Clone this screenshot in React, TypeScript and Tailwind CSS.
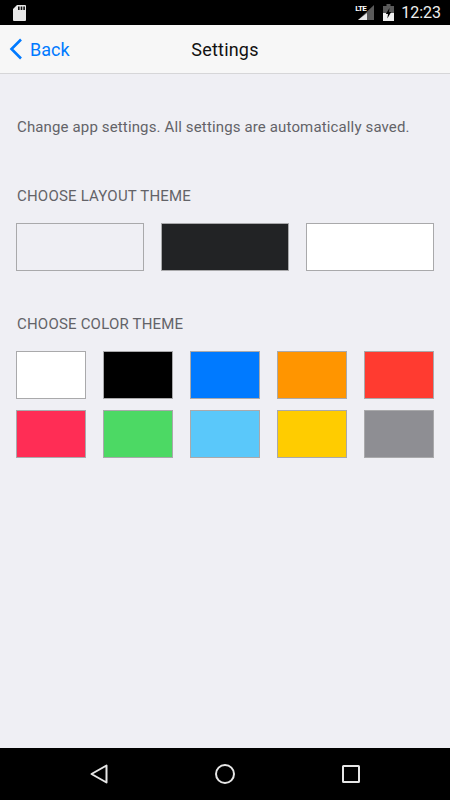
const layouts = ["bg-[#efeff4]", "bg-[#222325]", "bg-white"];
const colors = [
  "bg-white", "bg-black", "bg-[#007aff]", "bg-[#ff9500]", "bg-[#ff3b30]",
  "bg-[#ff2d55]", "bg-[#4cd964]", "bg-[#5ac8fa]", "bg-[#ffcc00]", "bg-[#8e8e93]",
];

export default function App() {
  return (
    <div className="flex h-[800px] w-[450px] flex-col overflow-hidden bg-[#efeff4] font-['Roboto',sans-serif]">
      <div className="flex h-[25px] items-center justify-between bg-black pl-[13px] pr-[9px]">
        <svg width="13" height="16" viewBox="0 0 13 16">
          <path d="M4 0H12a1 1 0 0 1 1 1V15a1 1 0 0 1-1 1H1a1 1 0 0 1-1-1V4Z" fill="#e8e8e8" />
          <rect x="5" y="1.5" width="1.6" height="3.5" fill="#111" />
          <rect x="7.7" y="1.5" width="1.6" height="3.5" fill="#111" />
          <rect x="10.3" y="1.5" width="1.6" height="3.5" fill="#111" />
        </svg>
        <div className="flex items-center">
          <div className="relative h-[17px] w-[20px]">
            <svg width="20" height="17" viewBox="0 0 20 17" className="absolute left-0 top-0">
              <path d="M20 1V16H4Z" fill="#5a5a5a" />
              <path d="M13 9V16H4Z" fill="#e8e8e8" />
            </svg>
            <span className="absolute left-[1px] top-[1px] text-[8px] font-bold leading-[8px] tracking-[-0.6px] text-white">LTE</span>
          </div>
          <svg width="11" height="17" viewBox="0 0 11 17" className="ml-[9px]">
            <path d="M3.5 0H7.5V2H11V17H0V2H3.5Z" fill="#5a5a5a" />
            <path d="M0 9H11V17H0Z" fill="#f0f0f0" />
            <path d="M6.5 4 2.8 10H5L4.3 14.5 8.2 8H6Z" fill="#000" />
          </svg>
          <span className="ml-[7px] text-[16px] leading-none text-[#eeeeee]">12:23</span>
        </div>
      </div>

      <div className="relative flex h-[49px] items-center justify-center border-b border-[#d6d6d8] bg-[#f7f7f7]">
        <div className="absolute left-[9px] top-0 flex h-full items-center text-[#007aff]">
          <svg width="14" height="22" viewBox="0 0 14 22">
            <path d="M12 1.5 2.5 11 12 20.5" fill="none" stroke="#007aff" strokeWidth="2.6" />
          </svg>
          <span className="ml-[7px] text-[18px]">Back</span>
        </div>
        <span className="text-[18px] tracking-[0.2px] text-[#111]">Settings</span>
      </div>

      <div className="flex-1 px-4">
        <p className="mt-[43px] pl-px text-[15px] leading-[20px] tracking-[0.14px] text-[#636368]">
          Change app settings. All settings are automatically saved.
        </p>

        <h2 className="mt-[49px] pl-px text-[15px] leading-[20px] tracking-[0.2px] text-[#636368]">CHOOSE LAYOUT THEME</h2>
        <div className="mt-[17px] grid grid-cols-3 gap-x-[16.5px]">
          {layouts.map((c) => (
            <div key={c} className={`h-[48px] border border-[#a9a9ab] ${c}`} />
          ))}
        </div>

        <h2 className="mt-[43px] pl-px text-[15px] leading-[20px] tracking-[0.2px] text-[#636368]">CHOOSE COLOR THEME</h2>
        <div className="mt-[17px] grid grid-cols-5 gap-x-[17px] gap-y-[11px]">
          {colors.map((c) => (
            <div key={c} className={`h-[48px] border border-[#a9a9ab] ${c}`} />
          ))}
        </div>
      </div>

      <div className="flex h-[52px] items-center justify-center gap-[105px] bg-black">
        <svg width="20" height="22" viewBox="0 0 20 22">
          <path d="M17.5 2.5V19.5L2.5 11Z" fill="none" stroke="#e6e6e6" strokeWidth="2" strokeLinejoin="round" />
        </svg>
        <svg width="22" height="22" viewBox="0 0 22 22">
          <circle cx="11" cy="11" r="9" fill="none" stroke="#e6e6e6" strokeWidth="2" />
        </svg>
        <svg width="20" height="20" viewBox="0 0 20 20">
          <rect x="2" y="2" width="16" height="16" rx="0.5" fill="none" stroke="#e6e6e6" strokeWidth="2" />
        </svg>
      </div>
    </div>
  );
}
